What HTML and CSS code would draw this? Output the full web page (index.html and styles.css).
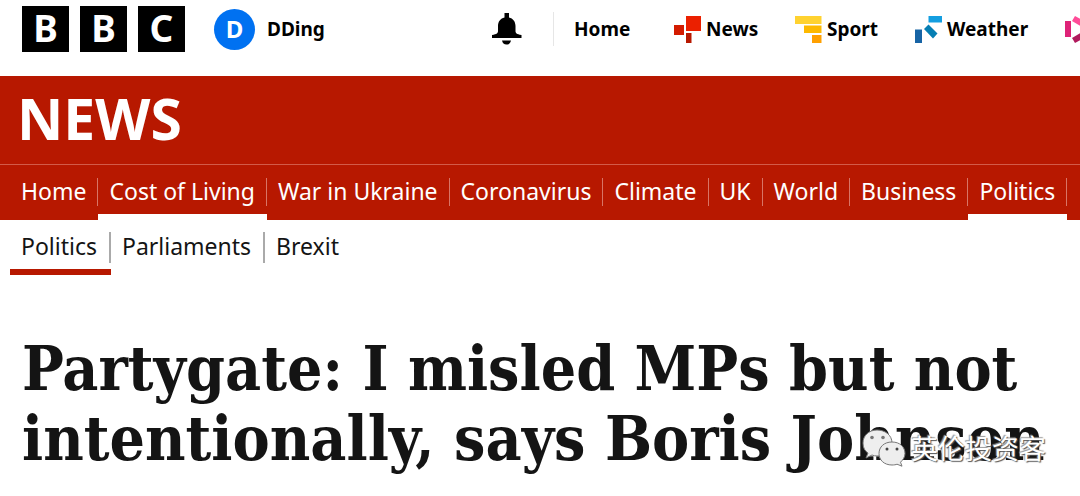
FILE: index.html
```html
<!DOCTYPE html>
<html lang="en">
<head>
<meta charset="utf-8">
<meta name="viewport" content="width=device-width">
<title>Partygate: I misled MPs but not intentionally, says Boris Johnson</title>
<link rel="stylesheet" href="styles.css">
</head>
<body>
<header class="topbar">
  <a class="logo" href="#" aria-label="BBC"><span>B</span><span>B</span><span>C</span></a>
  <a class="account" href="#"><span class="avatar">D</span>DDing</a>
  <button class="bell" aria-label="Notifications">
    <svg width="30" height="32" viewBox="0 0 30 32"><path d="M12.500 0h4.500v4.500c4 1 6.500 4 6.500 8.500v5c0 2 1 3.200 6 4v3H0v-3c5-.8 6-2 6-4v-5c0-4.500 2.500-7.500 6.500-8.500z"/><path d="M10 27.500h9c-.5 2.500-2 4-4.500 4s-4-1.500-4.500-4z"/></svg>
  </button>
  <nav class="services" aria-label="BBC services">
    <a class="service-home" href="#">Home</a>
    <a class="service-news" href="#"><svg width="27" height="27" viewBox="0 0 27 27"><path fill="#eb2000" d="M12 0h15v15H12z"/><path fill="#d31b00" d="M0 9h10v10H0z"/><path fill="#b71800" d="M12 17h5.500v10H12z"/></svg>News</a>
    <a class="service-sport" href="#"><svg width="27" height="27" viewBox="0 0 27 27"><path fill="#ffd230" d="M0 0h26.500v8H0z"/><path fill="#fdb900" d="M9 9.500h17.500V17H9z"/><path fill="#ffa000" d="M17 19h9.500v8H17z"/></svg>Sport</a>
    <a class="service-weather" href="#"><svg width="27" height="27" viewBox="0 0 27 27"><path fill="#149ee0" d="M13.500 0H27v6.500H13.500z"/><path fill="#067eb3" d="M13.500 8.500l9 9-4.500 5L9 13z"/><path fill="#1764a5" d="M0 13.500h7V27H0z"/></svg>Weather</a>
    <a class="service-iplayer" href="#" aria-label="iPlayer"><svg width="27" height="27" viewBox="0 0 27 27"><path fill="#de2378" d="M0 5h6v16H0z"/><path fill="#ff4c98" d="M10 0l16 9-4 5L7 5z"/><path fill="#b11a5d" d="M7 22l15-9 4 5-16 9z"/></svg></a>
  </nav>
</header>
<div class="masthead">
  <a class="brand" href="#">NEWS</a>
  <nav class="sections" aria-label="News sections">
    <a href="#">Home</a>
    <a class="current" href="#">Cost of Living</a>
    <a href="#">War in Ukraine</a>
    <a href="#">Coronavirus</a>
    <a href="#">Climate</a>
    <a href="#">UK</a>
    <a href="#">World</a>
    <a href="#">Business</a>
    <a class="current" href="#">Politics</a>
  </nav>
</div>
<nav class="subsections" aria-label="Politics sections">
  <a class="current" href="#">Politics</a>
  <a href="#">Parliaments</a>
  <a href="#">Brexit</a>
</nav>
<main class="article">
  <h1>Partygate: I misled MPs but not intentionally, says Boris Johnson</h1>
  <div class="watermark">
    <svg width="44" height="38" viewBox="0 0 44 38"><path class="bubble" d="M15 1C7 1 1 6.500 1 14c0 5 2 8 5 10l-2 5 6-3c2 .7 3 1 5 1 8 0 15-5 15-13S23 1 15 1z"/><g fill="#777"><circle cx="10" cy="8.500" r="1.800"/><circle cx="21" cy="8.500" r="1.800"/></g><path class="bubble" d="M30 13c-8 0-13 5-13 11.500S22 36 30 36c2 0 4-.3 5-.8l5 2-1.500-4C41 31 43 28 43 24.500 43 18 38 13 30 13z"/><g fill="#444"><circle cx="25" cy="20" r="1.500"/><circle cx="35" cy="20" r="1.500"/></g></svg>
    <span lang="zh">英伦投资客</span>
  </div>
</main>
</body>
</html>
```
FILE: styles.css
```css
* { box-sizing: border-box; }
body { margin: 0; background: #fff; color: #141414; font-family: "Noto Sans", "Open Sans", sans-serif; overflow-x: hidden; }
a { color: inherit; text-decoration: none; }
svg { display: block; flex: none; }

.topbar { display: flex; align-items: center; height: 76px; padding: 0 0 18px 22px; overflow: hidden; color: #000; font-size: 19px; font-weight: 700; }
.logo { display: flex; gap: 11px; }
.logo span { width: 47px; height: 46px; background: #000; color: #fff; font-size: 37px; line-height: 44px; text-align: center; }
.account { display: flex; align-items: center; gap: 12px; margin-left: 29px; line-height: 24px; }
.avatar { width: 41px; height: 41px; border-radius: 50%; background: #0071f1; color: #fff; font-size: 24px; line-height: 39px; text-align: center; }
.bell { margin-left: auto; padding: 0; border: 0; background: none; }
.services { display: flex; align-items: center; flex: none; width: 527px; height: 34px; margin-left: 31px; border-left: 1px solid #e6e6e6; }
.services a { display: flex; align-items: center; flex: none; gap: 5px; }
.service-home { width: 120px; padding-left: 20px; }
.service-news { width: 121px; }
.service-sport { width: 120px; }
.service-weather { width: 150px; }

.masthead { background: #b71800; color: #fff; }
.brand { display: block; height: 88px; padding-left: 17px; font-size: 57px; font-weight: 700; line-height: 84px; }
.sections, .subsections { display: flex; padding-left: 10px; font-size: 23px; line-height: 26px; }
.sections { border-top: 1px solid #d25b49; overflow: hidden; }
.sections a { flex: none; height: 55px; padding-top: 13px; border-bottom: 6px solid transparent; }
.sections a::before, .sections a::after, .subsections a::before, .subsections a::after { content: ""; }
.sections a, .subsections a { display: flex; }
.sections a::before, .subsections a::before { width: 11px; }
.sections a::after { width: 11px; height: 28px; border-right: 1px solid #d87466; }
.sections .current { border-bottom-color: #fff; }
.subsections { line-height: 28px; }
.subsections a { height: 55px; padding-top: 12px; border-bottom: 6px solid transparent; }
.subsections a::after { width: 12px; height: 31px; border-right: 2px solid #aaa; }
.subsections a:last-child::after { border: 0; }
.subsections .current { border-bottom-color: #b71800; }

.article { position: relative; padding: 59px 0 0 22px; }
h1 { margin: 0; font-family: "DejaVu Serif Condensed", "DejaVu Serif", serif; font-size: 62px; font-weight: 700; line-height: 70px; }
.watermark { position: absolute; right: 34px; bottom: 7px; display: flex; align-items: center; gap: 5px; color: #fff; font-family: "Noto Sans CJK SC", sans-serif; font-size: 27px; line-height: 38px; text-shadow: 1px 1px 1px #555, -1px -1px 1px #999; }
.bubble { fill: #eee; stroke: #777; stroke-width: 1; }
```
